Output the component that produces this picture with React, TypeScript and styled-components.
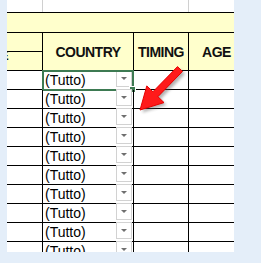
import styled, { createGlobalStyle } from "styled-components";

const GlobalStyle = createGlobalStyle`
  html, body {
    margin: 0;
    padding: 0;
    background: #e4eef9;
  }
  body {
    font-family: "Liberation Sans", Arial, sans-serif;
  }
`;

const COLS = "36px 91px 55px 56px";

const Page = styled.div`
  width: 261px;
  height: 263px;
  background: #e4eef9;
  padding-left: 7px;
  box-sizing: border-box;
  position: relative;
`;

const Sheet = styled.div`
  width: 227px;
  height: 252px;
  overflow: hidden;
  background: #fff;
  position: relative;
`;

const Row = styled.div<{ $h: number; $bg?: string }>`
  display: grid;
  grid-template-columns: ${COLS};
  height: ${(p) => p.$h}px;
  background: ${(p) => p.$bg || "#fff"};
  border-bottom: 1px solid #000;
  box-sizing: border-box;
`;

const GridCell = styled.div<{ $line?: string }>`
  border-right: 1px solid ${(p) => p.$line || "transparent"};
  box-sizing: border-box;
`;

const Band = styled.div`
  height: 20px;
  background: #ffffcc;
  border-bottom: 1px solid #000;
  box-sizing: border-box;
`;

const HeadCell = styled.div`
  border-right: 1px solid #000;
  box-sizing: border-box;
  display: flex;
  align-items: center;
  justify-content: center;
  font-weight: bold;
  font-size: 14px;
  letter-spacing: -0.5px;
  color: #111;
  padding-top: 1px;
  white-space: nowrap;
`;

const SplitCell = styled.div`
  border-right: 1px solid #000;
  box-sizing: border-box;
  display: grid;
  grid-template-rows: 19px 1fr;
  overflow: hidden;
`;

const SplitTop = styled.div`
  border-bottom: 1px solid #000;
`;

const SplitBottom = styled.div`
  font-weight: bold;
  font-size: 13px;
  line-height: 13px;
  margin-left: -7px;
  margin-top: -3px;
  color: #111;
`;

const Cell = styled.div`
  border-right: 1px solid #000;
  box-sizing: border-box;
  position: relative;
`;

const FilterCell = styled(Cell)`
  display: flex;
  align-items: center;
  justify-content: space-between;
  padding-left: 2px;
  font-size: 14px;
  color: #000;
`;

const DropButton = styled.div`
  width: 16px;
  height: 17px;
  margin-right: 1px;
  align-self: flex-start;
  margin-top: -1px;
  border: 1px solid #d2d2d2;
  box-sizing: border-box;
  background: #fff;
  display: flex;
  align-items: center;
  justify-content: center;
  &::after {
    content: "";
    border-left: 3px solid transparent;
    border-right: 3px solid transparent;
    border-top: 3px solid #6f6f6f;
  }
`;

const Selection = styled.div`
  position: absolute;
  left: -1px;
  top: -1px;
  width: 92px;
  height: 21px;
  border: 2px solid #3d7a52;
  box-sizing: border-box;
  pointer-events: none;
`;

const Handle = styled.div`
  position: absolute;
  right: -4px;
  bottom: -4px;
  width: 5px;
  height: 5px;
  background: #3d7a52;
  border: 1px solid #fff;
`;

const Arrow = styled.svg`
  position: absolute;
  left: 0;
  top: 0;
  pointer-events: none;
`;

const ARROW =
  "M182.5 71.4 L157.9 96.7 L164 102.6 L140 110 L146.8 85.9 L152.9 91.8 L177.5 66.6 Z";

const rows = Array.from({ length: 10 }, (_, i) => i);

export default function App() {
  return (
    <Page>
      <GlobalStyle />
      <Sheet>
        <Row $h={13}>
          <GridCell $line="#d0d0d0" />
          <GridCell />
          <GridCell $line="#d0d0d0" />
          <GridCell />
        </Row>
        <Band />
        <Row $h={38} $bg="#ffffcc">
          <SplitCell>
            <SplitTop />
            <SplitBottom>E</SplitBottom>
          </SplitCell>
          <HeadCell>COUNTRY</HeadCell>
          <HeadCell>TIMING</HeadCell>
          <HeadCell>AGE</HeadCell>
        </Row>
        {rows.map((i) => (
          <Row $h={19} key={i}>
            <Cell />
            <FilterCell>
              (Tutto)
              <DropButton />
              {i === 0 && (
                <Selection>
                  <Handle />
                </Selection>
              )}
            </FilterCell>
            <Cell />
            <Cell />
          </Row>
        ))}
      </Sheet>
      <Arrow width="261" height="263" viewBox="0 0 261 263">
        <defs>
          <filter id="sh" x="-30%" y="-30%" width="160%" height="160%">
            <feGaussianBlur stdDeviation="1.5" />
          </filter>
        </defs>
        <g transform="translate(2.5,2.5)" opacity="0.45" filter="url(#sh)">
          <path d={ARROW} fill="#555" />
        </g>
        <path d={ARROW} fill="#ff1a1a" stroke="#e60000" strokeWidth="1" strokeLinejoin="round" />
      </Arrow>
    </Page>
  );
}
